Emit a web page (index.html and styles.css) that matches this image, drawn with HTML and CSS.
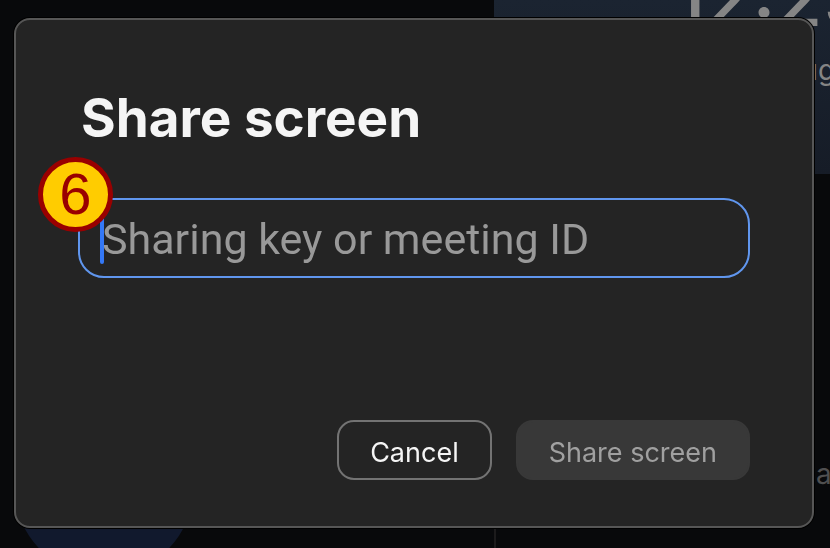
FILE: index.html
```html
<!DOCTYPE html>
<html lang="en">
<head>
    <meta charset="UTF-8">
    <meta name="viewport" content="width=device-width, initial-scale=1.0">
    <title>Share screen</title>
    <link rel="stylesheet" href="styles.css">
</head>
<body>
    <div class="home">
        <div class="home-actions">
            <div class="action-tile"></div>
        </div>
        <div class="home-side">
            <div class="wallpaper">
                <div class="clock">12:25</div>
                <div class="date">August</div>
            </div>
            <div class="agenda">a</div>
        </div>
    </div>

    <div class="overlay">
        <form class="dialog" role="dialog" aria-labelledby="dialog-title">
            <h1 id="dialog-title">Share screen</h1>
            <div class="field">
                <input type="text" id="share-key" placeholder="Sharing key or meeting ID" aria-label="Sharing key or meeting ID">
                <span class="caret"></span>
                <span class="step-badge">6</span>
            </div>
            <div class="dialog-actions">
                <button type="button" class="button cancel-button">Cancel</button>
                <button type="submit" class="button share-button" disabled>Share screen</button>
            </div>
        </form>
    </div>
</body>
</html>
```

FILE: styles.css
```css
* {
    box-sizing: border-box;
}
body {
    margin: 0;
    font-family: Inter, "Liberation Sans", sans-serif;
    background-color: #08090b;
    overflow: hidden;
}

/* dimmed home window */
.home {
    display: grid;
    grid-template-columns: 494px 1fr;
    height: 100vh;
    overflow: hidden;
}
.home-actions {
    padding: 396px 14px 0;
}
.action-tile {
    width: 180px;
    height: 180px;
    border-radius: 50%;
    background-color: #11192d;
}
.home-side {
    display: flex;
    flex-direction: column;
    overflow: hidden;
    white-space: nowrap;
}
.wallpaper {
    height: 174px;
    background: linear-gradient(#1b2431, #161c27);
    color: #858585;
}
.clock {
    margin-top: -40px;
    padding-left: 180px;
    font-size: 76px;
    font-weight: 500;
    line-height: 76px;
}
.date {
    margin-top: 14px;
    padding-left: 288px;
    font-size: 28px;
    line-height: 40px;
}
.agenda {
    flex: 1;
    padding: 282px 0 0 320px;
    border-left: 2px solid #1c1b1c;
    font-size: 28px;
    line-height: 36px;
    color: #4f4f50;
}

/* dialog */
.overlay {
    position: fixed;
    inset: 0;
    display: flex;
    padding: 18px 16px 20px 14px;
}
.dialog {
    flex: 1;
    display: flex;
    flex-direction: column;
    padding: 64px 62px 46px;
    border: 2px solid #565656;
    border-radius: 16px;
    background-color: #242424;
    box-shadow: 0 0 0 1px #000;
}
.dialog h1 {
    margin: 0 0 46px;
    padding-left: 3px;
    font-size: 53px;
    line-height: 68px;
    color: #f5f5f5;
}
.field {
    position: relative;
}
.field input {
    display: block;
    width: 100%;
    height: 80px;
    padding: 2px 22px 0;
    border: 2px solid #6096ee;
    border-radius: 26px;
    outline: none;
    background-color: transparent;
    color: #f5f5f5;
    font-family: Roboto, "Liberation Sans", sans-serif;
    font-size: 43px;
}
.field input::placeholder {
    color: #999;
}
.caret {
    position: absolute;
    top: 16px;
    left: 22px;
    width: 4px;
    height: 50px;
    border-radius: 2px;
    background-color: #3478f6;
}
.step-badge {
    position: absolute;
    top: -41px;
    left: -40px;
    width: 75px;
    height: 75px;
    border: 5px solid #990000;
    border-radius: 50%;
    background-color: #ffcc00;
    color: #990000;
    font-family: "Liberation Sans", Arial, sans-serif;
    font-size: 58px;
    line-height: 64px;
    text-align: center;
}
.dialog-actions {
    display: flex;
    justify-content: flex-end;
    gap: 24px;
    margin-top: auto;
}
.button {
    height: 60px;
    padding: 4px 31px 0;
    border: 2px solid #737373;
    border-radius: 17px;
    background-color: transparent;
    color: #f5f5f5;
    font-family: inherit;
    font-size: 27px;
    cursor: pointer;
}
.share-button {
    border-color: #383838;
    background-color: #383838;
    color: #a0a0a0;
    cursor: default;
}
```
